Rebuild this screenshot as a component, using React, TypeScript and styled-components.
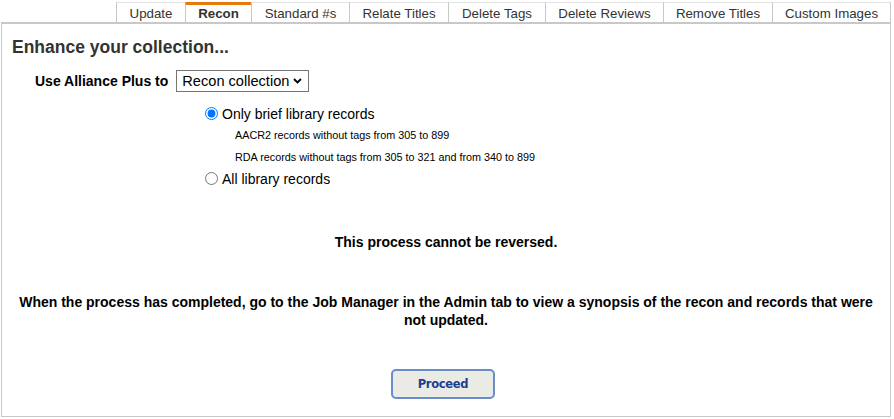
import React, { useState } from "react";
import styled, { createGlobalStyle } from "styled-components";

const Global = createGlobalStyle`
  html, body { margin: 0; padding: 0; background: #fff; }
  body { font-family: Arial, "Liberation Sans", sans-serif; color: #000; }
`;

const Page = styled.div`
  width: 894px;
  height: 419px;
  padding: 2px 3px 0 1px;
  box-sizing: border-box;
  display: flex;
  flex-direction: column;
`;

const TabBar = styled.div`
  display: flex;
  justify-content: flex-end;
  height: 20px;
`;

const Tab = styled.div<{ $w: number; $active?: boolean }>`
  width: ${(p) => p.$w}px;
  box-sizing: border-box;
  display: flex;
  align-items: center;
  justify-content: center;
  font-family: Arial, "Liberation Sans", sans-serif;
  font-size: 13.3px;
  color: #333;
  font-weight: ${(p) => (p.$active ? 700 : 400)};
  background: #fff;
  border-left: 1px solid #c8c8c8;
  border-top: ${(p) => (p.$active ? "3px solid #e87a0c" : "1px solid #e4e4e4")};
  padding-top: ${(p) => (p.$active ? "0" : "2px")};
  &:last-child { border-right: 1px solid #c8c8c8; }
`;

const Panel = styled.div`
  flex: 1;
  border: 1px solid #c8c8c8;
  border-top: 2px solid #c8c8c8;
  display: flex;
  flex-direction: column;
  margin-bottom: 2px;
`;

const Heading = styled.h2`
  margin: 13px 0 0 10px;
  font-size: 17.5px;
  font-weight: 700;
  color: #333;
  line-height: 20px;
`;

const UseRow = styled.div`
  display: flex;
  align-items: center;
  margin: 13px 0 0 33px;
  gap: 8px;
`;

const Label = styled.label`
  font-size: 14px;
  font-weight: 700;
  white-space: nowrap;
`;

const SelectWrap = styled.div`
  position: relative;
  display: flex;
`;

const Select = styled.select`
  appearance: none;
  -webkit-appearance: none;
  font-family: Arial, "Liberation Sans", sans-serif;
  font-size: 14.6px;
  height: 22px;
  width: 133px;
  border: 1px solid #767676;
  border-radius: 0;
  padding: 0 0 0 5px;
  color: #000;
  background: #fff;
  outline: none;
`;

const Chevron = styled.svg`
  position: absolute;
  right: 7px;
  top: 8px;
  width: 9px;
  height: 6px;
  pointer-events: none;
`;

const Options = styled.div`
  display: flex;
  flex-direction: column;
  margin: 11px 0 0 200px;
`;

const RadioRow = styled.label`
  display: flex;
  align-items: center;
  font-size: 14px;
  height: 21px;
  gap: 4px;
  input { margin: 0 0 0 3px; width: 13px; height: 13px; accent-color: #0075ff; }
`;

const Note = styled.div`
  font-size: 10.8px;
  margin-left: 33px;
  height: 22px;
  line-height: 22px;
`;

const Warning = styled.p`
  margin: 45px 0 0 0;
  text-align: center;
  font-size: 14px;
  font-weight: 700;
`;

const Info = styled.p`
  margin: 43px 14px 0 14px;
  text-align: center;
  font-size: 14px;
  font-weight: 700;
  line-height: 18px;
`;

const ButtonRow = styled.div`
  display: flex;
  justify-content: center;
  margin-top: 40px;
  padding-right: 6px;
`;

const Button = styled.button`
  width: 104px;
  height: 30px;
  border: 2px solid #6a8cc8;
  border-radius: 5px;
  background: #ebebe6;
  color: #1d3f8f;
  font-family: Tahoma, "DejaVu Sans", Verdana, sans-serif;
  font-weight: 700;
  font-size: 11.5px;
  letter-spacing: -0.3px;
  cursor: pointer;
`;

const tabs = [
  { label: "Update", w: 69 },
  { label: "Recon", w: 66, active: true },
  { label: "Standard #s", w: 98 },
  { label: "Relate Titles", w: 99 },
  { label: "Delete Tags", w: 97 },
  { label: "Delete Reviews", w: 118 },
  { label: "Remove Titles", w: 109 },
  { label: "Custom Images", w: 119 },
];

export default function App() {
  const [scope, setScope] = useState("brief");
  return (
    <Page>
      <Global />
      <TabBar>
        {tabs.map((t) => (
          <Tab key={t.label} $w={t.w} $active={t.active}>
            {t.label}
          </Tab>
        ))}
      </TabBar>
      <Panel>
        <Heading>Enhance your collection...</Heading>
        <UseRow>
          <Label htmlFor="recon">Use Alliance Plus to</Label>
          <SelectWrap>
            <Select id="recon" defaultValue="recon">
              <option value="recon">Recon collection</option>
            </Select>
            <Chevron viewBox="0 0 9 6">
              <path d="M1 1 L4.5 4.5 L8 1" fill="none" stroke="#000" strokeWidth="1.8" />
            </Chevron>
          </SelectWrap>
        </UseRow>
        <Options>
          <RadioRow>
            <input
              type="radio"
              name="scope"
              checked={scope === "brief"}
              onChange={() => setScope("brief")}
            />
            Only brief library records
          </RadioRow>
          <Note>AACR2 records without tags from 305 to 899</Note>
          <Note>RDA records without tags from 305 to 321 and from 340 to 899</Note>
          <RadioRow>
            <input
              type="radio"
              name="scope"
              checked={scope === "all"}
              onChange={() => setScope("all")}
            />
            All library records
          </RadioRow>
        </Options>
        <Warning>This process cannot be reversed.</Warning>
        <Info>
          When the process has completed, go to the Job Manager in the Admin tab to view a synopsis of the recon and records that were not updated.
        </Info>
        <ButtonRow>
          <Button>Proceed</Button>
        </ButtonRow>
      </Panel>
    </Page>
  );
}
